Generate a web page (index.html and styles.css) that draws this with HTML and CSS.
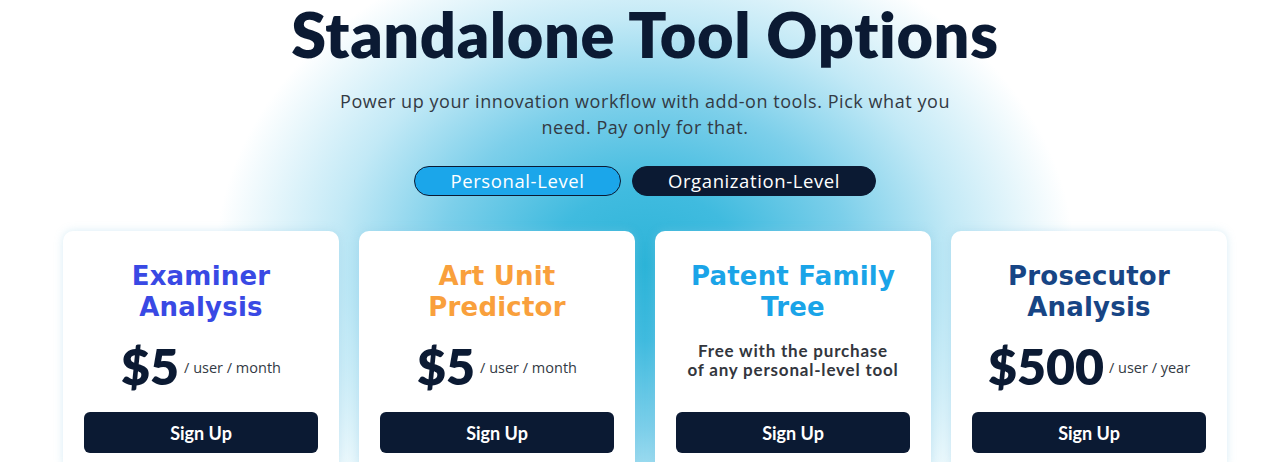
FILE: index.html
```html
<!DOCTYPE html>
<html lang="en">
<head>
<meta charset="utf-8">
<title>Standalone Tool Options</title>
<link rel="stylesheet" href="styles.css">
</head>
<body>
<section class="page">
  <h1 class="title">Standalone Tool Options</h1>
  <p class="subtitle">Power up your innovation workflow with add-on tools. Pick what you<br>need. Pay only for that.</p>
  <div class="toggle">
    <button class="pill pill-active">Personal-Level</button>
    <button class="pill pill-dark">Organization-Level</button>
  </div>
  <div class="cards">
    <div class="card">
      <h2 class="card-title c-examiner">Examiner<br>Analysis</h2>
      <div class="price"><span class="amount">$5</span><span class="per">/ user / month</span></div>
      <button class="signup">Sign Up</button>
    </div>
    <div class="card">
      <h2 class="card-title c-art">Art Unit<br>Predictor</h2>
      <div class="price"><span class="amount">$5</span><span class="per">/ user / month</span></div>
      <button class="signup">Sign Up</button>
    </div>
    <div class="card">
      <h2 class="card-title c-family">Patent Family<br>Tree</h2>
      <div class="free">Free with the purchase<br>of any personal-level tool</div>
      <button class="signup">Sign Up</button>
    </div>
    <div class="card">
      <h2 class="card-title c-prosecutor">Prosecutor<br>Analysis</h2>
      <div class="price"><span class="amount">$500</span><span class="per">/ user / year</span></div>
      <button class="signup">Sign Up</button>
    </div>
  </div>
</section>
</body>
</html>
```

FILE: styles.css
```css
* { box-sizing: border-box; }
html, body {
  margin: 0;
  padding: 0;
  height: 462px;
  overflow: hidden;
}
body {
  background: #ffffff;
  font-family: "Lato", "Noto Sans", sans-serif;
}
.page {
  height: 462px;
  padding-left: 10px;
  display: flex;
  flex-direction: column;
  align-items: center;
  background:
    radial-gradient(ellipse 430px 340px at 645px 265px,
      #2db4d8 0%, #40bbdf 22%, #7ccfea 48%, #c2e9f6 72%, rgba(255,255,255,0) 100%);
}
.title {
  margin: 0;
  font-family: "Lato", sans-serif;
  font-weight: 800;
  font-size: 63px;
  line-height: 68px;
  letter-spacing: 0.6px;
  color: #0b1a33;
}
.subtitle {
  margin: 20px 0 0;
  font-family: "Open Sans", sans-serif;
  font-size: 18px;
  line-height: 26px;
  letter-spacing: 0.55px;
  color: #333a44;
  text-align: center;
}
.toggle {
  margin-top: 26px;
  display: flex;
  gap: 11px;
}
.pill {
  height: 30px;
  border-radius: 15px;
  font-family: "Open Sans", sans-serif;
  font-weight: 500;
  font-size: 18.5px;
  letter-spacing: 0.6px;
  line-height: 26px;
  color: #ffffff;
  padding: 0;
  cursor: pointer;
}
.pill-active {
  width: 207px;
  background: #1ba6ea;
  border: 1.5px solid #0b1a33;
}
.pill-dark {
  width: 244px;
  background: #0b1a33;
  border: 1.5px solid #0b1a33;
}
.cards {
  margin-top: 35px;
  display: flex;
  gap: 20px;
}
.card {
  width: 276px;
  height: 240px;
  background: #ffffff;
  border-radius: 10px;
  padding: 30px 21px 0;
  display: flex;
  flex-direction: column;
  align-items: center;
  box-shadow: 0 0 8px rgba(140, 200, 225, 0.35);
}
.card-title {
  margin: 0;
  font-family: "DejaVu Sans", sans-serif;
  font-weight: 700;
  font-size: 26px;
  line-height: 31px;
  text-align: center;
  letter-spacing: 0.2px;
}
.c-examiner { color: #3949e4; }
.c-art { color: #f9a03c; }
.c-family { color: #1aa4e8; }
.c-prosecutor { color: #174585; }
.price {
  height: 85px;
  display: flex;
  align-items: center;
  justify-content: center;
  gap: 5px;
  color: #0b1a33;
}
.amount {
  font-family: "Lato", sans-serif;
  font-weight: 800;
  font-size: 50px;
  line-height: 50px;
}
.per {
  font-family: "Open Sans", sans-serif;
  font-size: 14.5px;
  color: #333a44;
  padding-top: 4px;
}
.free {
  height: 85px;
  padding-bottom: 12px;
  display: flex;
  align-items: center;
  text-align: center;
  font-family: "Lato", sans-serif;
  font-weight: 700;
  font-size: 17px;
  line-height: 19px;
  letter-spacing: 0.8px;
  color: #33363d;
}
.signup {
  margin-top: 4px;
  width: 234px;
  height: 41px;
  border: none;
  border-radius: 6px;
  background: #0b1a33;
  color: #ffffff;
  font-family: "Lato", sans-serif;
  font-weight: 700;
  font-size: 18px;
  cursor: pointer;
}
```
